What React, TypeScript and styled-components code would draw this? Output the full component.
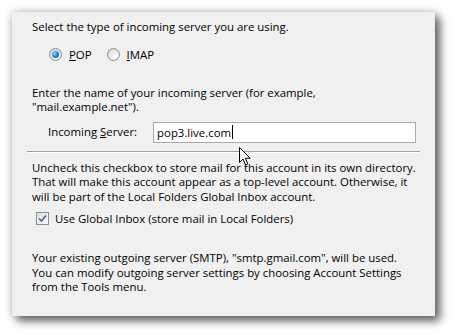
import * as React from 'react';
import styled, { createGlobalStyle } from 'styled-components';

const GlobalStyle = createGlobalStyle`
  html, body {
    margin: 0;
    padding: 0;
    background: #ffffff;
  }
  body {
    font-family: 'Open Sans', 'Noto Sans', sans-serif;
    font-size: 11.4px;
    color: #000000;
  }
`;

const Page = styled.div`
  width: 455px;
  height: 336px;
  padding: 12px;
  box-sizing: border-box;
  position: relative;
  overflow: hidden;
`;

const Panel = styled.div`
  width: 423px;
  height: 304px;
  box-sizing: border-box;
  padding: 0 15px 0 20px;
  background: #f0f0f0;
  display: flex;
  flex-direction: column;
  box-shadow: 5px 5px 9px rgba(0, 0, 0, 0.6), 0 0 8px rgba(0, 0, 0, 0.22);
`;

const Text = styled.p<{ $top: number }>`
  margin: ${(p) => p.$top}px 0 0 0;
  line-height: 14.5px;
  white-space: nowrap;
`;

const RadioRow = styled.div`
  display: flex;
  align-items: center;
  height: 20px;
  margin: 10px 0 0 17px;
  gap: 15px;
`;

const RadioOption = styled.label`
  display: flex;
  align-items: center;
  gap: 7px;
`;

const RadioDot = styled.span<{ $checked?: boolean }>`
  width: 11px;
  height: 11px;
  border-radius: 50%;
  border: 1px solid #8e8f8f;
  background: radial-gradient(circle at 60% 65%, #ffffff 0%, #e4e4e4 55%, #c9c9c9 100%);
  display: flex;
  align-items: center;
  justify-content: center;
  &::after {
    content: '';
    display: ${(p) => (p.$checked ? 'block' : 'none')};
    width: 7px;
    height: 7px;
    border-radius: 50%;
    background: radial-gradient(circle at 35% 35%, #8fd6ff 0%, #2b8ed6 45%, #0c3f74 100%);
  }
`;

const FieldRow = styled.div`
  display: flex;
  align-items: center;
  margin: 7px 0 0 16px;
  gap: 16px;
`;

const FieldLabel = styled.span`
  line-height: 14px;
`;

const InputBox = styled.div`
  width: 263px;
  height: 21px;
  box-sizing: border-box;
  border: 1px solid #a9a9a9;
  background: #ffffff;
  display: flex;
  align-items: center;
  padding-left: 3px;
  color: #000;
`;

const Caret = styled.span`
  display: inline-block;
  width: 1px;
  height: 14px;
  background: #000;
  margin-left: 1px;
`;

const Divider = styled.div`
  margin: 8px 0 0 -5px;
  height: 1px;
  background: #a0a0a0;
  border-bottom: 1px solid #ffffff;
`;

const CheckRow = styled.label`
  display: flex;
  align-items: center;
  height: 16px;
  margin: 6px 0 0 4px;
  gap: 6px;
`;

const CheckBox = styled.span`
  width: 11px;
  height: 11px;
  border: 1px solid #8e8f8f;
  background: linear-gradient(135deg, #dcdcdc 0%, #ffffff 100%);
  display: flex;
  align-items: center;
  justify-content: center;
`;

const Pointer = styled.svg`
  position: absolute;
  left: 239px;
  top: 147px;
`;

export default function App() {
  return (
    <Page>
      <GlobalStyle />
      <Panel>
        <Text $top={8}>Select the type of incoming server you are using.</Text>
        <RadioRow>
          <RadioOption>
            <RadioDot $checked />
            <span>
              <u>P</u>OP
            </span>
          </RadioOption>
          <RadioOption>
            <RadioDot />
            <span>
              <u>I</u>MAP
            </span>
          </RadioOption>
        </RadioRow>
        <Text $top={21}>
          Enter the name of your incoming server (for example,
          <br />
          "mail.example.net").
        </Text>
        <FieldRow>
          <FieldLabel>
            Incoming <u>S</u>erver:
          </FieldLabel>
          <InputBox>
            pop3.live.com
            <Caret />
          </InputBox>
        </FieldRow>
        <Divider />
        <Text $top={8}>
          Uncheck this checkbox to store mail for this account in its own directory.
          <br />
          That will make this account appear as a top-level account. Otherwise, it
          <br />
          will be part of the Local Folders Global Inbox account.
        </Text>
        <CheckRow>
          <CheckBox>
            <svg width="9" height="9" viewBox="0 0 9 9">
              <path d="M1 4.5 L3.5 7 L8 1.5" fill="none" stroke="#4a5f97" strokeWidth="1.6" />
            </svg>
          </CheckBox>
          <span>Use Global Inbox (store mail in Local Folders)</span>
        </CheckRow>
        <Text $top={25}>
          Your existing outgoing server (SMTP), "smtp.gmail.com", will be used.
          <br />
          You can modify outgoing server settings by choosing Account Settings
          <br />
          from the Tools menu.
        </Text>
      </Panel>
      <Pointer width="13" height="20" viewBox="0 0 13 20">
        <path
          d="M0.5 0.5 L0.5 15.5 L4 12 L6.5 18 L8.8 17 L6.3 11.2 L11.2 11.2 Z"
          fill="#ffffff"
          stroke="#000000"
          strokeWidth="1"
          strokeLinejoin="miter"
        />
      </Pointer>
    </Page>
  );
}
